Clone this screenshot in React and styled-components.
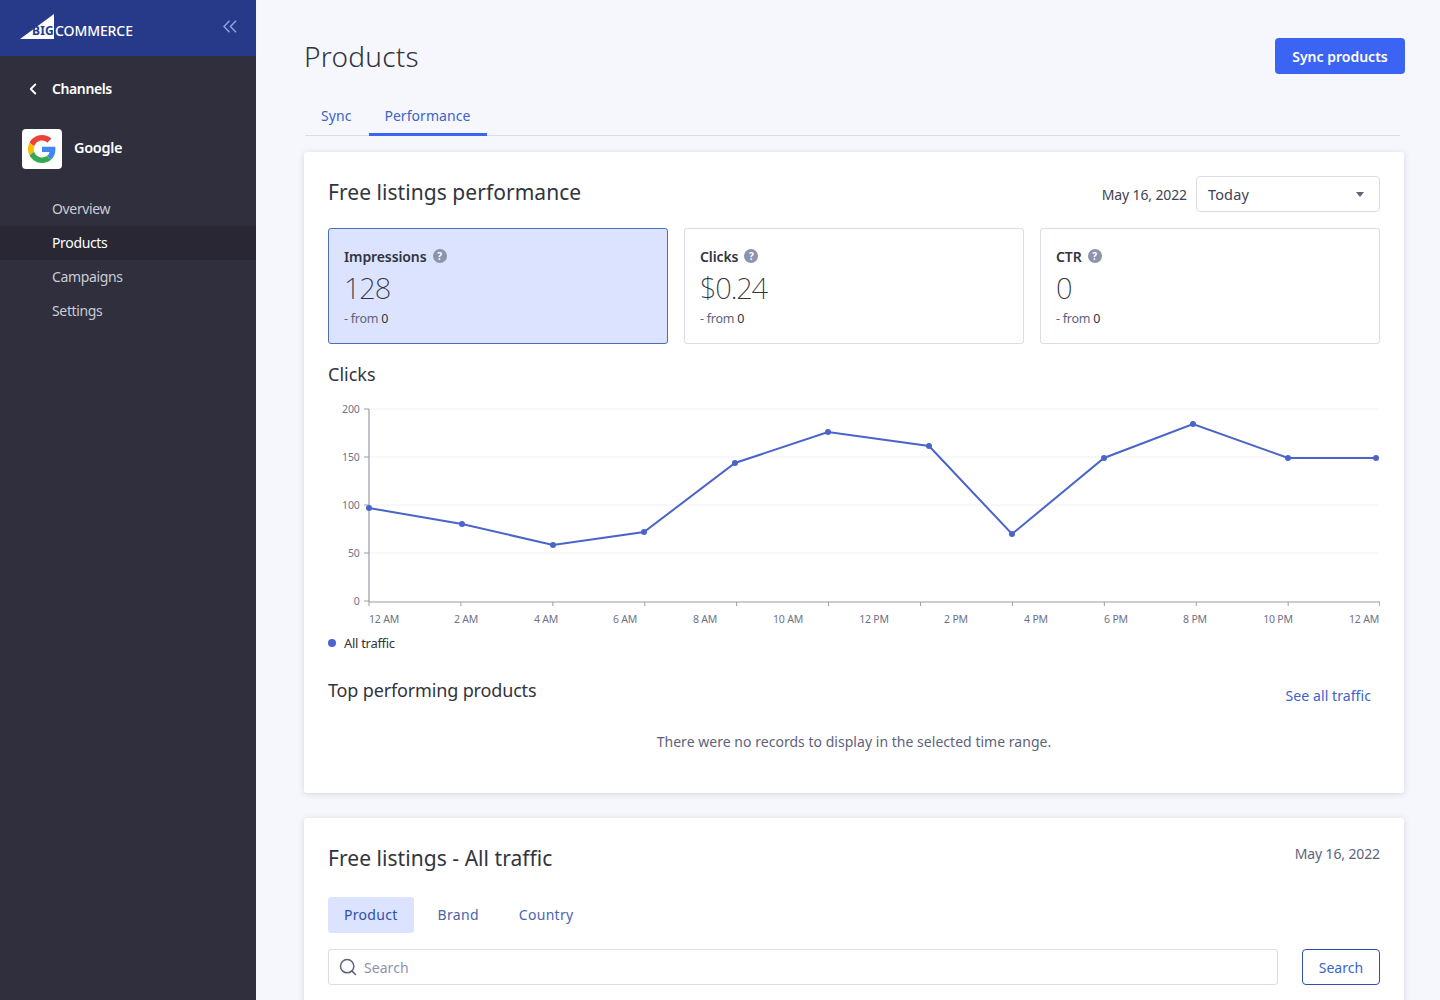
import React from 'react'
import styled, { createGlobalStyle } from 'styled-components'
import { ChevronLeft, Search as SearchIcon } from 'lucide-react'

const GlobalStyle = createGlobalStyle`
  html, body {
    margin: 0;
    height: 100%;
    overflow: hidden;
  }
  body {
    background: #f6f7fc;
    font-family: "Noto Sans", "Open Sans", sans-serif;
    color: #313440;
  }
  * {
    box-sizing: border-box;
  }
`

const Layout = styled.div`
  display: flex;
  height: 1000px;
  overflow: hidden;
`

const Sidebar = styled.aside`
  width: 256px;
  flex-shrink: 0;
  background: #302f3d;
  color: #fff;
`

const Brand = styled.div`
  height: 56px;
  background: #273a8a;
  display: flex;
  align-items: center;
  justify-content: space-between;
  padding: 0 19px 0 20px;
`

const Logo = styled.div`
  position: relative;
  width: 114px;
  height: 26px;
  margin-top: -3px;
`

const LogoBig = styled.span`
  position: absolute;
  left: 12px;
  top: 9px;
  font-size: 12px;
  font-weight: 700;
  line-height: 16px;
  letter-spacing: 0.2px;
  color: #273a8a;
`

const LogoCommerce = styled.span`
  position: absolute;
  left: 35px;
  top: 9px;
  font-size: 14px;
  font-weight: 500;
  line-height: 16px;
  letter-spacing: -0.1px;
  color: #fff;
`

const Collapse = styled.svg`
  display: block;
  margin-top: -4px;
  fill: none;
  stroke: #8f9fe0;
  stroke-width: 1.5;
`

const BackLink = styled.div`
  display: flex;
  align-items: center;
  gap: 10px;
  height: 24px;
  margin-top: 21px;
  padding-left: 24px;
  font-size: 14px;
  font-weight: 600;
  letter-spacing: -0.4px;

  span {
    margin-top: -2px;
  }
`

const Channel = styled.div`
  display: flex;
  align-items: center;
  gap: 12px;
  margin: 28px 0 23px 22px;
  font-size: 14.5px;
  font-weight: 600;
  letter-spacing: -0.3px;

  span {
    margin-bottom: 4px;
  }
`

const ChannelIcon = styled.div`
  width: 40px;
  height: 40px;
  background: #fff;
  border-radius: 4px;
  display: flex;
  align-items: center;
  justify-content: center;
`

const NavItem = styled.div`
  height: 34px;
  line-height: 34px;
  padding-left: 52px;
  font-size: 14px;
  letter-spacing: -0.35px;
  color: ${props => props.$active ? '#ffffff' : '#c9ccd6'};
  background: ${props => props.$active ? '#282733' : 'transparent'};
`

const Main = styled.main`
  flex: 1;
  min-width: 0;
  padding: 38px 35px 0 48px;
`

const Header = styled.div`
  display: flex;
  align-items: flex-start;
  justify-content: space-between;
`

const PageTitle = styled.h1`
  margin: 0;
  font-size: 28px;
  font-weight: 300;
  line-height: 36px;
  letter-spacing: 0.25px;
  color: #313440;
`

const PrimaryButton = styled.button`
  width: 130px;
  height: 36px;
  border: 0;
  border-radius: 4px;
  background: #3c64f4;
  color: #fff;
  font: 600 14px "Noto Sans", sans-serif;
  letter-spacing: 0;
`

const TabBar = styled.div`
  display: flex;
  gap: 2px;
  height: 36px;
  margin: 26px 5px 16px 1px;
  border-bottom: 1px solid #d9dce9;
`

const Tab = styled.div`
  height: 36px;
  padding: ${props => props.$active ? '0 17px 0 15px' : '0 16px'};
  line-height: 32px;
  font-size: 14px;
  letter-spacing: 0.05px;
  color: #3c64c8;
  border-bottom: 3px solid ${props => props.$active ? '#3c64f4' : 'transparent'};
`

const Card = styled.section`
  background: #fff;
  padding: 24px;
  margin: 0 1px 25px 0;
  height: ${props => props.$height};
  border-radius: 3px;
  box-shadow: 0 1px 6px rgba(49, 52, 64, 0.16);
`

const CardHeader = styled.div`
  display: flex;
  align-items: center;
  justify-content: space-between;
  height: 36px;
`

const CardTitle = styled.h2`
  margin: 0 0 4px;
  font-size: 21px;
  font-weight: 400;
  line-height: 32px;
  letter-spacing: 0.05px;
  color: #313440;
`

const DateRange = styled.div`
  display: flex;
  align-items: center;
  gap: 9px;
  font-size: 14px;
  letter-spacing: -0.13px;
  color: #3f4250;
`

const Select = styled.div`
  width: 184px;
  height: 36px;
  padding: 0 11px;
  display: flex;
  align-items: center;
  justify-content: space-between;
  background: #fff;
  border: 1px solid #d9dce9;
  border-radius: 4px;
  font-size: 14.5px;
  letter-spacing: 0.15px;
`

const Caret = styled.span`
  width: 0;
  height: 0;
  margin-right: 4px;
  border-left: 4px solid transparent;
  border-right: 4px solid transparent;
  border-top: 5px solid #5e637a;
`

const Stats = styled.div`
  display: grid;
  grid-template-columns: repeat(3, 1fr);
  gap: 16px;
  margin-top: 16px;
`

const Stat = styled.div`
  height: 116px;
  padding: 16px 15px;
  border: 1px solid ${props => props.$active ? '#4a6fb8' : '#d9dce9'};
  border-radius: 3px;
  background: ${props => props.$active ? '#dbe3fe' : '#fff'};
`

const StatLabel = styled.div`
  display: flex;
  align-items: center;
  gap: 6px;
  height: 22px;
  font-size: 14px;
  font-weight: 600;
  letter-spacing: -0.1px;
`

const Help = styled.span`
  width: 14px;
  height: 14px;
  border-radius: 50%;
  background: #8c93ad;
  color: #fff;
  font-size: 10px;
  font-weight: 700;
  line-height: 14px;
  text-align: center;
  letter-spacing: 0;
`

const StatValue = styled.div`
  margin-top: 2px;
  height: 38px;
  font-size: 29px;
  font-weight: 200;
  line-height: 38px;
  letter-spacing: -1.2px;
`

const StatFrom = styled.div`
  margin-top: 2px;
  font-size: 12.5px;
  line-height: 20px;
  letter-spacing: -0.25px;
  color: #5e637a;

  b {
    font-weight: 400;
    color: #313440;
  }
`

const SectionTitle = styled.h3`
  margin: 17px 0 0;
  font-size: 18px;
  font-weight: 400;
  line-height: 26px;
  letter-spacing: 0;
`

const ChartSvg = styled.svg`
  display: block;
  margin-top: 13px;
  font-family: "Noto Sans", sans-serif;
  font-size: 10.5px;
  letter-spacing: -0.2px;
  fill: #6e7387;
`

const Legend = styled.div`
  display: flex;
  align-items: center;
  gap: 8px;
  height: 20px;
  margin-top: 5px;
  font-size: 13px;
  letter-spacing: -0.3px;
`

const LegendDot = styled.span`
  width: 8px;
  height: 8px;
  border-radius: 50%;
  background: #4a64d0;
`

const TopRow = styled.div`
  display: flex;
  align-items: center;
  justify-content: space-between;
  padding-right: 9px;
  margin-top: 24px;
  height: 34px;
`

const TopTitle = styled.h3`
  margin: 0 0 8px;
  font-size: 18px;
  font-weight: 400;
  letter-spacing: -0.15px;
`

const TextLink = styled.span`
  margin-top: 2px;
  font-size: 14px;
  letter-spacing: 0.08px;
  color: #3c64c8;
`

const Empty = styled.div`
  margin-top: 21px;
  text-align: center;
  font-size: 14px;
  letter-spacing: 0.03px;
  color: #5e637a;
`

const ListingDate = styled.span`
  align-self: flex-start;
  margin-top: 2px;
  font-size: 14px;
  letter-spacing: -0.13px;
  color: #5e637a;
`

const Pills = styled.div`
  display: flex;
  gap: 8px;
  margin-top: 19px;
`

const Pill = styled.div`
  height: 36px;
  padding: 0 16px;
  line-height: 36px;
  font-size: 14px;
  letter-spacing: 0.3px;
  border-radius: 3px;
  color: ${props => props.$active ? '#2f4fa8' : '#4a64b0'};
  background: ${props => props.$active ? '#dbe3fe' : 'transparent'};
`

const SearchRow = styled.div`
  display: flex;
  gap: 24px;
  margin-top: 16px;
`

const SearchField = styled.div`
  flex: 1;
  height: 36px;
  display: flex;
  align-items: center;
  gap: 6px;
  padding: 0 9px;
  border: 1px solid #d9dce9;
  border-radius: 3px;
  color: #8c93ad;
  font-size: 14px;
  letter-spacing: 0.05px;
`

const OutlineButton = styled.button`
  width: 78px;
  height: 36px;
  background: #fff;
  border: 1px solid #2f4fa8;
  border-radius: 4px;
  color: #3c64c8;
  font: 400 14px "Noto Sans", sans-serif;
  letter-spacing: 0.05px;
`

const GoogleLogo = () => (
  <svg width="28" height="28" viewBox="0 0 48 48">
    <path fill="#EA4335" d="M24 9.5c3.5 0 6.7 1.2 9.2 3.6l6.9-6.9C35.9 2.4 30.5 0 24 0 14.6 0 6.5 5.4 2.6 13.2l8 6.2C12.5 13.6 17.8 9.5 24 9.5z" />
    <path fill="#4285F4" d="M47 24.5c0-1.6-.1-3.1-.4-4.5H24v9h12.9c-.6 3-2.2 5.5-4.7 7.2l7.7 6c4.5-4.2 7.1-10.3 7.1-17.7z" />
    <path fill="#FBBC05" d="M10.6 28.6c-.5-1.5-.8-3-.8-4.6s.3-3.1.8-4.6l-8-6.2C.9 16.5 0 20.1 0 24s.9 7.5 2.6 10.8l8-6.2z" />
    <path fill="#34A853" d="M24 48c6.5 0 11.9-2.1 15.9-5.8l-7.7-6c-2.2 1.5-4.9 2.3-8.2 2.3-6.2 0-11.5-4.2-13.4-9.9l-8 6.2C6.5 42.6 14.6 48 24 48z" />
  </svg>
)

const points = [
  [369, 508], [462, 524], [553, 545], [644, 532], [735, 463], [828, 432],
  [929, 446], [1012, 534], [1104, 458], [1193, 424], [1288, 458], [1376, 458],
]
const yAxis = [['200', 409], ['150', 457], ['100', 505], ['50', 553], ['0', 601]]
const xLabels = [
  ['12 AM', 384], ['2 AM', 466], ['4 AM', 546], ['6 AM', 625], ['8 AM', 705], ['10 AM', 788], ['12 PM', 874],
  ['2 PM', 956], ['4 PM', 1036], ['6 PM', 1116], ['8 PM', 1195], ['10 PM', 1278], ['12 AM', 1364],
]
const OX = 328
const OY = 400

function Chart() {
  return (
    <ChartSvg width="1052" height="228" viewBox={`${OX} ${OY} 1052 228`}>
      {yAxis.slice(0, 4).map(([, y]) => (
        <line key={y} x1="369" x2="1378" y1={y} y2={y} stroke="#f0f1f5" />
      ))}
      {yAxis.map(([label, y]) => (
        <g key={label}>
          <text x="359.5" y={y + 4} textAnchor="end">{label}</text>
          <line x1="364" x2="369" y1={y} y2={y} stroke="#9a9ca6" />
        </g>
      ))}
      <line x1="369" x2="369" y1="409" y2="602" stroke="#9a9ca6" strokeWidth="1.2" />
      <line x1="369" x2="1380" y1="602" y2="602" stroke="#9a9ca6" strokeWidth="1.2" />
      {Array.from({ length: 12 }, (_, i) => 369 + i * 91.917).concat(1380).map(x => (
        <line key={x} x1={x} x2={x} y1="602" y2="606" stroke="#9a9ca6" />
      ))}
      {xLabels.map(([label, x], i) => (
        <text key={i} x={x} y="623" textAnchor="middle">{label}</text>
      ))}
      <polyline points={points.join(' ')} fill="none" stroke="#4a64c8" strokeWidth="2" />
      {points.map(([x, y]) => (
        <circle key={x} cx={x} cy={y} r="3" fill="#4a64c8" />
      ))}
    </ChartSvg>
  )
}

function StatCard({ label, value, active }) {
  return (
    <Stat $active={active}>
      <StatLabel>{label} <Help>?</Help></StatLabel>
      <StatValue>{value}</StatValue>
      <StatFrom>- from <b>0</b></StatFrom>
    </Stat>
  )
}

export default function App() {
  return (
    <Layout>
      <GlobalStyle />
      <Sidebar>
        <Brand>
          <Logo>
            <svg width="36" height="26" viewBox="0 0 36 26">
              <polygon points="0,25 34,0 34,25" fill="#fff" />
            </svg>
            <LogoBig>BIG</LogoBig>
            <LogoCommerce>COMMERCE</LogoCommerce>
          </Logo>
          <Collapse width="14" height="13" viewBox="0 0 14 13">
            <path d="M6.5 .8 1 6.5l5.5 5.7M13 .8 7.5 6.5l5.5 5.7" />
          </Collapse>
        </Brand>
        <BackLink>
          <ChevronLeft size={18} strokeWidth={2.5} />
          <span>Channels</span>
        </BackLink>
        <Channel>
          <ChannelIcon><GoogleLogo /></ChannelIcon>
          <span>Google</span>
        </Channel>
        <NavItem>Overview</NavItem>
        <NavItem $active>Products</NavItem>
        <NavItem>Campaigns</NavItem>
        <NavItem>Settings</NavItem>
      </Sidebar>
      <Main>
        <Header>
          <PageTitle>Products</PageTitle>
          <PrimaryButton>Sync products</PrimaryButton>
        </Header>
        <TabBar>
          <Tab>Sync</Tab>
          <Tab $active>Performance</Tab>
        </TabBar>
        <Card $height="641px">
          <CardHeader>
            <CardTitle>Free listings performance</CardTitle>
            <DateRange>
              May 16, 2022
              <Select>Today <Caret /></Select>
            </DateRange>
          </CardHeader>
          <Stats>
            <StatCard label="Impressions" value="128" active />
            <StatCard label="Clicks" value="$0.24" />
            <StatCard label="CTR" value="0" />
          </Stats>
          <SectionTitle>Clicks</SectionTitle>
          <Chart />
          <Legend><LegendDot /> All traffic</Legend>
          <TopRow>
            <TopTitle>Top performing products</TopTitle>
            <TextLink>See all traffic</TextLink>
          </TopRow>
          <Empty>There were no records to display in the selected time range.</Empty>
        </Card>
        <Card $height="300px">
          <CardHeader>
            <CardTitle>Free listings - All traffic</CardTitle>
            <ListingDate>May 16, 2022</ListingDate>
          </CardHeader>
          <Pills>
            <Pill $active>Product</Pill>
            <Pill>Brand</Pill>
            <Pill>Country</Pill>
          </Pills>
          <SearchRow>
            <SearchField>
              <SearchIcon size={20} strokeWidth={1.8} color="#5e637a" />
              Search
            </SearchField>
            <OutlineButton>Search</OutlineButton>
          </SearchRow>
        </Card>
      </Main>
    </Layout>
  )
}
